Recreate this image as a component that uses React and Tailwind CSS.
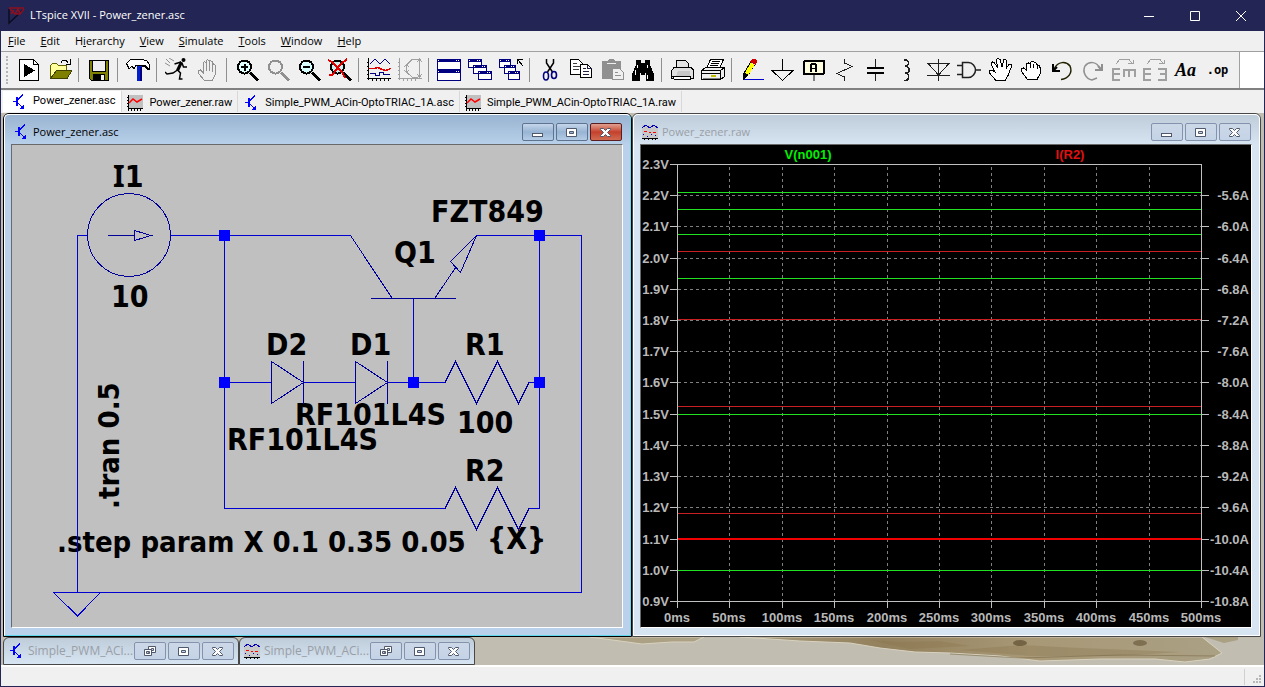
import React from "react";

const UI = "font-['Open_Sans','Noto_Sans',sans-serif]";

/* ---------- small document icons ---------- */

function AscIcon() {
  return (
    <svg viewBox="0 0 16 16" className="h-4 w-4 shrink-0" fill="none" stroke="#0000ff" shapeRendering="crispEdges" aria-hidden="true">
      <path d="M2 7.500h3" />
      <path d="M6 3v9" strokeWidth="2" />
      <path d="M12 0.500L6.500 6M7 9l5 5" />
      <path d="M12.500 11v4H9z" fill="#0000ff" stroke="none" />
    </svg>
  );
}

function RawIcon() {
  return (
    <svg viewBox="0 0 16 16" className="h-4 w-4 shrink-0" fill="none" shapeRendering="crispEdges" aria-hidden="true">
      <rect x="1" y="0" width="15" height="14" fill="#c0c0c0" />
      <path d="M1.500 0v16M1 13.500h15" stroke="#000" />
      <path d="M0 2.500h1M0 5.500h1M0 8.500h1M0 11.500h1M4.500 14v2M7.500 14v2M10.500 14v2M13.500 14v2" stroke="#000" />
      <path d="M2 8l4-4 4 3 5-3" stroke="#ff0000" strokeWidth="1.500" shapeRendering="auto" />
    </svg>
  );
}

function PlotIcon() {
  return (
    <svg viewBox="0 0 16 16" className="h-4 w-4 shrink-0" fill="none" shapeRendering="crispEdges" aria-hidden="true">
      <rect x="0" y="1" width="16" height="14" fill="#c8c8c8" />
      <path d="M0 4l4-3 4 3 4-3 4 3" stroke="#0000c0" />
      <path d="M2 7.500h3M7 8.500h2M11 8.500h3" stroke="#ff0000" />
      <path d="M1 10.500h1M5 12.500h1M9 10.500h1M13 11.500h1" stroke="#0000c0" />
      <path d="M0 14.500h16M2.500 15v1M6.500 15v1M10.500 15v1M13.500 15v1" stroke="#000" />
    </svg>
  );
}

/* ---------- toolbar icons, drawn on a 24 unit grid ---------- */

const glass = (c, lens) => (
  <>
    <circle cx="9.500" cy="9" r="6.500" fill={lens} stroke={c} strokeWidth="2" />
    <path d="M15 14.500l8 8" stroke={c} strokeWidth="3" />
  </>
);

const win = (x, y, w, h) => (
  <g key={`${x}-${y}`}>
    <rect x={x + 0.5} y={y + 0.5} width={w - 1} height={h - 1} fill="#fff" stroke="#000080" />
    <rect x={x} y={y} width={w} height="3" fill="#000080" />
    <path d={`M${x + 1} ${y + 1.5}h1M${x + w - 5} ${y + 1.5}h1M${x + w - 3} ${y + 1.5}h1`} stroke="#fff" />
  </g>
);

const ICONS = {
  new: (
    <>
      <path d="M2.500 1.500h14l5 5v15.500h-19z" fill="#fff" stroke="#000" />
      <path d="M16.500 1.500v5h5" stroke="#000" />
      <path d="M7 6l11 6.500L7 19z" fill="#000" />
    </>
  ),
  open: (
    <>
      <path d="M2.500 19.500v-12l2-2h4l2 2h8v4" fill="#ffff9c" stroke="#606000" />
      <path d="M2.500 20.500l6-8h15.500l-5 8z" fill="#808000" stroke="#404000" />
      <path d="M13 4.500c1-3 5-3 7 0M22.500 1v5h-5" stroke="#000" />
    </>
  ),
  save: (
    <>
      <path d="M2.500 2.500h19v20h-17l-2-2z" fill="#808000" stroke="#000" />
      <rect x="6" y="3" width="12" height="10" fill="#efefef" />
      <rect x="6" y="16" width="12" height="6" fill="#000" />
      <rect x="14" y="17" width="3" height="5" fill="#efefef" />
      <path d="M5.500 3v10h13V3" stroke="#000" />
    </>
  ),
  hammer: (
    <>
      <rect x="11" y="8" width="5" height="15" fill="#0020d0" />
      <path d="M15 9v14" stroke="#000080" strokeWidth="2" />
      <path d="M0.500 5.500L4 2l12-.500 5 1.500 2.500 3.500v5h-2l-3-4H10l-2 3-2-2-3 2z" fill="#fff" stroke="#000" />
      <path d="M16 7.500h3l3 4" stroke="#000" strokeWidth="2" />
    </>
  ),
  run: (
    <g shapeRendering="auto">
      <circle cx="18.500" cy="2" r="2" fill="#000" />
      <path d="M16 4L9.500 6M17 5l1.500 4h3.500M12.500 12L8 15l-6 1-2-2M12.500 12l3 3-1 6h3" stroke="#000" strokeWidth="1.500" />
      <path d="M16.500 4l-4 8.500" stroke="#000" strokeWidth="3" />
      <path d="M1 1l4 4M4 0l5 3M0 5l5 3" stroke="#909090" />
    </g>
  ),
  halt: (
    <>
      <path
        d="M8.500 22.500L2.500 15.500V12.500l2-.500 3 3V4.500l1-1 1.500 1V2.500l1.500-1 1.500 1v1l1.500-1 1.500 1V7l1.500-1 1.500 1V17l-2.500 5.500z"
        fill="#efefef"
        stroke="#909090"
      />
      <path d="M10.500 4v9M13.500 3v10M16.500 6v8" stroke="#909090" />
    </>
  ),
  zoomIn: (
    <>
      {glass("#000", "#e0ffff")}
      <path d="M6 9h7M9.500 5.500v7" stroke="#000" strokeWidth="2" />
    </>
  ),
  pan: glass("#909090", "#efefef"),
  zoomOut: (
    <>
      {glass("#000", "#d8ffff")}
      <path d="M6 9h7" stroke="#000" strokeWidth="2" />
    </>
  ),
  zoomFull: (
    <>
      {glass("#000", "#c8f0f0")}
      <path d="M0 2l4 2 10 10 3 6M19 1l-6 5L4 17H1" stroke="#e00000" strokeWidth="2" />
    </>
  ),
  autorange: (
    <>
      <path d="M1.500 0v22M0 20.500h24M0 4.500h1M0 8.500h1M0 12.500h1M0 16.500h1M5.500 21v2M9.500 21v2M13.500 21v2M17.500 21v2M21.500 21v2" stroke="#000" />
      <path d="M3 6l5-5 5 5 5-5 5 5" stroke="#000080" />
      <path d="M2 10.500h5l4-1 4 2 4 1 5-2" stroke="#e00000" strokeWidth="1.500" />
      <path d="M3 15.500h5v2h4v-3h4v2h7" stroke="#000080" />
    </>
  ),
  reset: (
    <path d="M1.500 0v22M0 20.500h24M0 4.500h1M0 8.500h1M0 12.500h1M0 16.500h1M5.500 21v2M9.500 21v2M13.500 21v2M17.500 21v2M20 1.500H14L8.500 7v7l5.500 5h6M21.500 1v18M19 4l2.500-3L24 4M19 16l2.500 3 2.500-3M6 9l2.500-2L11 9M6 12l2.500 2 2.500-2" stroke="#a0a0a0" />
  ),
  tile: (
    <>
      {win(0, 1, 24, 11)}
      {win(0, 12, 24, 11)}
    </>
  ),
  cascade: (
    <>
      {win(0, 1, 14, 9)}
      {win(5, 7, 14, 9)}
      {win(10, 13, 14, 9)}
    </>
  ),
  closeAll: (
    <>
      {win(0, 1, 12, 9)}
      {win(5, 7, 12, 9)}
      {win(9, 13, 12, 9)}
      <path d="M18.500 6V1.500h5M19 2l5 6" stroke="#000" />
    </>
  ),
  cut: (
    <g shapeRendering="auto">
      <path d="M8.500 1v4l6 9M15.500 1v4l-6 9" stroke="#000" strokeWidth="1.500" />
      <ellipse cx="8" cy="18" rx="2.500" ry="4" stroke="#000080" strokeWidth="1.600" />
      <ellipse cx="16" cy="17" rx="2.500" ry="3.500" stroke="#000080" strokeWidth="1.600" />
    </g>
  ),
  copy: (
    <>
      <path d="M1.500 1.500h8l4 4v11h-12z" fill="#fff" stroke="#000" />
      <path d="M4 5.500h4M4 8.500h7M4 11.500h6" stroke="#404040" />
      <path d="M11.500 6.500h7l4 4v9h-11z" fill="#fff" stroke="#000" />
      <path d="M18.500 6.500v4h4M14 10.500h3M14 13.500h6M14 16.500h6" stroke="#202040" />
    </>
  ),
  paste: (
    <>
      <path d="M2 3h5l2-2h4l2 2h6v18H2z" fill="#909090" />
      <path d="M7 5.500h9" stroke="#efefef" />
      <path d="M12.500 10.500h7l4 4v7h-11z" fill="#efefef" stroke="#909090" />
      <path d="M15 14.500h3M15 17.500h6" stroke="#909090" />
    </>
  ),
  find: (
    <>
      <path d="M5 2h5v3h4V2h5v5l4 9v7h-8v-8h-1v2h-4v-2H9v8H1v-7l4-9z" fill="#000" />
      <path d="M6.500 7v3M4.500 12v5M16.500 7v3M16.500 17v4" stroke="#fff" />
    </>
  ),
  setup: (
    <>
      <path d="M6.500 9V2.500h9l3 3V9" fill="#e4e4e4" stroke="#000" />
      <path d="M4 9.500h17l2 2v9H1.500v-8z" fill="#e0e0e0" stroke="#000" />
      <path d="M8 13h12v6H6z" fill="#c8c8c8" />
      <path d="M2.500 18.500h18v3H4.500z" fill="#fff" stroke="#000" />
    </>
  ),
  print: (
    <>
      <path d="M5.500 10l4-8.500h13l-4 8.500z" fill="#fff" stroke="#000" />
      <path d="M11 3.500h8M10 5.500h8M9 7.500h8" stroke="#000" />
      <path d="M0.500 12.500l4-3h19l-4 3zM0.500 12.500h19v9h-19zM19.500 12.500l4-3v9l-4 3z" fill="#efefef" stroke="#000" />
      <path d="M1 15.500h18" stroke="#000" />
      <path d="M10 17.500h5" stroke="#c0c000" strokeWidth="2" />
      <path d="M2 20.500h17" stroke="#808080" />
    </>
  ),
  wire: (
    <>
      <path d="M3 22v-6L10 4l5 3-7 11z" fill="#000" />
      <path d="M5 15L10.500 5l4 2-6 10z" fill="#ffff00" />
      <path d="M10 4l2-3h3l2 2-1 4z" fill="#d00000" />
      <path d="M4 21.500h20" stroke="#0000d0" />
    </>
  ),
  ground: <path d="M11.500 1v11M0 12.500h23M1 12.500l10.500 10 10.500-10" stroke="#000" />,
  label: (
    <>
      <rect x="2" y="3" width="20" height="13" rx="1" fill="#ffffe0" stroke="#000" strokeWidth="2" />
      <path d="M9 14V7l1-1h3l1 1v7M9 10.500h5" stroke="#000" strokeWidth="1.800" />
      <path d="M12 17v6" stroke="#808080" strokeWidth="2" />
    </>
  ),
  resistor: <path d="M11.500 1v4l7.500 3.500-15 7 7.500 3.500v4" stroke="#202020" />,
  capacitor: (
    <>
      <path d="M11.500 1v8M11.500 15v8" stroke="#202020" />
      <path d="M3 10h17M3 15h17" stroke="#000" strokeWidth="2" />
    </>
  ),
  inductor: (
    <path d="M8.500 2h3l2 2v2l-2 2h-2M10 8.500h2l2 2v3l-2 1.500h-2.500M10 15.500h2l1.500 2v3l-2 2H8.500" stroke="#202020" strokeWidth="1.500" />
  ),
  diode: <path d="M12.500 1v22M1 5.500h23M2.500 6l10 11L22.500 6M1 17.500h23" stroke="#202020" />,
  component: (
    <path d="M0 7.500h6M0 16.500h6M5.500 4.500v15h6c4 0 7-4 7-7.500s-3-7.500-7-7.500zM19 12h5" stroke="#202020" strokeWidth="1.500" shapeRendering="auto" />
  ),
  move: (
    <path d="M8 22.500l-7-8V12h3l3 2-4-8 1.500-2 2 1L10 10 8 2l2-1.500 2 1L14 9l2-7.500 2 .5.500 2L18 11l3-5 2 .5.500 2-3.500 9-3 5z" fill="#fff" stroke="#000" />
  ),
  drag: (
    <path d="M8.500 21.500l-6-8V11l2-1 3 2V6l2-1 1.500 1 1-2 2-1 1.500 1.500L17 5l1 1.500 2 1 1 2V16l-3 5.500zM11 6v4M14.500 6v4M18 7v4" fill="#fff" stroke="#000" />
  ),
  undo: (
    <g shapeRendering="auto">
      <path d="M4 11C8 3 16 3 20 8c3 7-2 13-9 13.500" stroke="#202000" strokeWidth="1.500" />
      <path d="M3 6v7h7M3 13l4-4" stroke="#000" strokeWidth="2" />
    </g>
  ),
  redo: (
    <g shapeRendering="auto">
      <path d="M19 11C16 3 8 3 4 8c-3 6 1 13 7 14l5-2" stroke="#909090" strokeWidth="1.500" />
      <path d="M21 6v6h-7M21 12l-4-4" stroke="#909090" strokeWidth="2" />
    </g>
  ),
  rotate: (
    <>
      <path d="M4 6l4-5h9l3 5M16 5.500h5V2" stroke="#a0a0a0" />
      <path d="M8 11H0M8 16H0M8 22H0M1 10v13M11 12h13M12 12v7M17 12v7M23 12v7" stroke="#a0a0a0" strokeWidth="2" />
    </>
  ),
  mirror: (
    <>
      <path d="M4 6l4-5h9l3 5M16 5.500h5V2" stroke="#a0a0a0" />
      <path d="M8 11H0M8 16H0M8 22H0M1 10v13M15 11h8M17 16h6M15 22h8M23 10v13" stroke="#a0a0a0" strokeWidth="2" />
    </>
  ),
};

const SEP = null;
const TOOLS = [
  ["New schematic", "new"], ["Open", "open"], SEP,
  ["Save", "save"], SEP,
  ["Control panel", "hammer"], SEP,
  ["Run", "run"], ["Halt", "halt"], SEP,
  ["Zoom in", "zoomIn"], ["Pan", "pan"], ["Zoom out", "zoomOut"], ["Zoom full extents", "zoomFull"], SEP,
  ["Autorange", "autorange"], ["Reset axis", "reset"], SEP,
  ["Tile windows", "tile"], ["Cascade windows", "cascade"], ["Close all windows", "closeAll"], SEP,
  ["Cut", "cut"], ["Copy", "copy"], ["Paste", "paste"], ["Find", "find"], SEP,
  ["Print setup", "setup"], ["Print", "print"], SEP,
  ["Wire", "wire"], ["Ground", "ground"], ["Label net", "label"], ["Resistor", "resistor"],
  ["Capacitor", "capacitor"], ["Inductor", "inductor"], ["Diode", "diode"], ["Component", "component"],
  ["Move", "move"], ["Drag", "drag"], ["Undo", "undo"], ["Redo", "redo"], ["Rotate", "rotate"], ["Mirror", "mirror"],
];

function Toolbar() {
  return (
    <div className="flex h-[37px] border-t border-[#a0a0a0] bg-white">
      <div className="flex items-center border-r border-[#a0a0a0] bg-[#f0f0f0] pr-[6px]">
        <div className="mr-[6px] ml-[5px] h-7 w-0 border-l-2 border-dotted border-[#b4b4b4]" />
        {TOOLS.map((t, i) =>
          t === SEP ? (
            <div key={i} className="h-6 w-2 pl-[2px]">
              <div className="h-full w-px bg-[#909090]" />
            </div>
          ) : (
            <button key={i} type="button" aria-label={t[0]} className="w-[31px] pl-[3px]">
              <svg viewBox="0 0 24 24" className="h-6 w-6" fill="none" shapeRendering="crispEdges" aria-hidden="true">
                {ICONS[t[1]]}
              </svg>
            </button>
          )
        )}
        <button type="button" aria-label="Text" className="w-[31px] pl-1 text-left font-['Liberation_Serif',serif] text-lg leading-6 font-bold text-black italic">
          Aa
        </button>
        <button type="button" aria-label="SPICE directive" className="w-[31px] text-center font-['DejaVu_Sans_Mono',monospace] text-xs leading-6 font-bold text-black">
          .op
        </button>
      </div>
    </div>
  );
}

/* ---------- application chrome ---------- */

function TitleBar() {
  return (
    <header className="flex h-[31px] items-center bg-[#232654] text-white">
      <svg viewBox="0 0 20 18" className="ml-[6px] h-[18px] w-5" fill="none" aria-hidden="true">
        <path d="M2 2v14L16 3" stroke="#0c0c20" strokeWidth="1.500" />
        <path d="M2 1h15M3 2l5 5 3-5 2 5 4-5M4 7l3-4M9 7h3" stroke="#8c1020" strokeWidth="1.500" />
      </svg>
      <h1 className="ml-[3px] flex-1 text-[11px]">LTspice XVII - Power_zener.asc</h1>
      {[
        ["Minimize", "M5 10.500h10"],
        ["Maximize", "M5.500 5.500h9v9h-9z"],
        ["Close", "M5 5l10 10M15 5L5 15"],
      ].map(([label, d]) => (
        <button key={label} type="button" aria-label={label} className="flex h-full w-[46px] items-center justify-center">
          <svg viewBox="0 0 20 20" className="h-5 w-5" fill="none" stroke="#fff" aria-hidden="true">
            <path d={d} />
          </svg>
        </button>
      ))}
    </header>
  );
}

const MENUS = [
  ["", "F", "ile"], ["", "E", "dit"], ["H", "i", "erarchy"], ["", "V", "iew"],
  ["", "S", "imulate"], ["", "T", "ools"], ["", "W", "indow"], ["", "H", "elp"],
];

function MenuBar() {
  return (
    <nav className="flex h-5 items-center gap-[15px] bg-[#f0f0f0] pl-[7px] text-[11px] text-black">
      {MENUS.map(([a, b, c]) => (
        <button key={b + c} type="button">
          {a}
          <u>{b}</u>
          {c}
        </button>
      ))}
    </nav>
  );
}

function Tabs() {
  return (
    <div className="flex h-[25px] items-start border-t-2 border-[#808080] bg-[#f0f0f0] pt-px pl-[2px] font-['Roboto',sans-serif] text-[11px] text-black">
      <button type="button" className="flex h-[21px] items-center gap-[6px] border-r border-[#d8d8d8] bg-white pr-[6px] pl-2">
        <AscIcon />
        Power_zener.asc
      </button>
      {[
        ["raw", "Power_zener.raw"],
        ["asc", "Simple_PWM_ACin-OptoTRIAC_1A.asc"],
        ["raw", "Simple_PWM_ACin-OptoTRIAC_1A.raw"],
      ].map(([kind, name]) => (
        <button key={name} type="button" className="flex h-[21px] items-center gap-[6px] border-r border-[#d8d8d8] pt-[3px] pr-[5px] pl-[5px]">
          {kind === "asc" ? <AscIcon /> : <RawIcon />}
          {name}
        </button>
      ))}
    </div>
  );
}

/* ---------- document windows ---------- */

const GLYPHS = {
  Minimize: <rect x="4.500" y="9.500" width="10" height="3" fill="#fff" stroke="#50586c" />,
  Maximize: <path fillRule="evenodd" d="M4.500 4.500h10v8h-10zM7.500 7.500v2h4v-2z" fill="#fff" stroke="#50586c" />,
  Restore: (
    <g fill="#fff" stroke="#50586c">
      <path fillRule="evenodd" d="M8.500 3.500h7v6h-7zM11.500 5.500v2h2v-2z" />
      <path fillRule="evenodd" d="M4.500 6.500h7v6h-7zM6.500 8.500v2h3v-2z" />
    </g>
  ),
  Close: (
    <path d="M4.500 4.500h3l2 2 2-2h3v1l-3 3 3 3v1h-3l-2-2-2 2h-3v-1l3-3-3-3z" fill="#fff" stroke="#50586c" />
  ),
};

function CaptionButtons({ kinds, active, title }) {
  return (
    <div className="flex gap-[2px]">
      {kinds.map((k) => {
        const look = !active
          ? "border-[#8592ad] bg-linear-to-b from-[#ccd8e8] to-[#c4d3e6]"
          : k === "Close"
            ? "border-[#5a1e22] bg-linear-to-b from-[#e0a090] via-[#c4402c] to-[#d06a50]"
            : "border-[#5f7390] bg-linear-to-b from-[#c4d6ea] via-[#98b4d4] to-[#b4cce6]";
        return (
          <button key={k} type="button" aria-label={`${k} ${title}`} className={`flex h-[18px] w-8 items-center justify-center rounded-[2px] border ${look}`}>
            <svg viewBox="0 0 20 16" className="h-4 w-5" aria-hidden="true">
              {GLYPHS[k]}
            </svg>
          </button>
        );
      })}
    </div>
  );
}

function DocWindow({ title, icon, active, children }) {
  return (
    <section
      className={`min-w-0 flex-1 rounded-t-md border ${active ? "border-black bg-[#b9d1ea]" : "border-[#484848] bg-[#d7e4f2]"}`}
    >
      <div className={`rounded-t-[5px] border border-t-white border-l-white pr-[7px] pb-[7px] pl-[6px] ${active ? "border-r-[#5fd8f0] border-b-[#5fd8f0] bg-linear-to-b from-[#99b4d1] via-[#b9d1ea] via-[30px] to-[#b9d1ea]" : "border-r-white border-b-white bg-linear-to-b from-[#bfcddb] via-[#d7e4f2] via-[30px] to-[#d7e4f2]"}`}>
        <div className="flex h-[29px] items-center gap-1 pt-[5px] pr-px pl-[2px]">
          {icon}
          <h2 className={`flex-1 text-[11px] leading-4 ${active ? "text-black" : "text-[#9a9fa6]"}`}>{title}</h2>
          <CaptionButtons kinds={["Minimize", "Maximize", "Close"]} active={active} title={title} />
        </div>
        <div className="border border-t-[#696969] border-r-white border-b-white border-l-[#696969]">{children}</div>
      </div>
    </section>
  );
}

function MinimizedWindow({ title, icon }) {
  return (
    <section className="flex h-7 w-[236px] items-center rounded-t-md border border-[#484848] bg-linear-to-b from-[#bfcddb] to-[#d7e4f2] pr-1 pl-1">
      {icon}
      <h2 className="ml-1 flex-1 truncate text-xs text-[#9a9fa6]">{title}</h2>
      <CaptionButtons kinds={["Restore", "Maximize", "Close"]} title={title} />
    </section>
  );
}

/* ---------- schematic ---------- */

const resistor = (y) => `M445 ${y}L455.500 ${y - 21}L476.500 ${y + 21}L497.500 ${y - 21}L518.500 ${y + 21}L529 ${y}`;
const diode = (x) => `M${x}.500 361.500V403.500L${x + 32}.500 382.500ZM${x + 32}.500 361V404`;

function Schematic() {
  return (
    <svg viewBox="12 145 610 482" className="block h-auto w-full bg-[#c0c0c0]" role="img" aria-label="Power_zener schematic">
      <g className="fill-black font-['DejaVu_Sans_Condensed','DejaVu_Sans',sans-serif] text-[30px] font-bold">
        <text x="113" y="187"><tspan className="font-['Noto_Sans',sans-serif]">I</tspan>1</text>
        <text x="111" y="307">10</text>
        <text x="431" y="222">FZT849</text>
        <text x="394" y="263">Q1</text>
        <text x="266" y="355">D2</text>
        <text x="350" y="355">D1</text>
        <text x="465" y="355">R1</text>
        <text x="457" y="433">100</text>
        <text x="295" y="425">RF101L4S</text>
        <text x="227" y="450">RF101L4S</text>
        <text x="465" y="481">R2</text>
        <text x="487" y="549">{"{X}"}</text>
        <text className="text-[29px]" x="57" y="552">.step param X 0.1 0.35 0.05</text>
        <text className="text-[29px]" transform="translate(119 509) rotate(-90)">.tran 0.5</text>
      </g>
      <g fill="none" stroke="#0000d0" shapeRendering="crispEdges">
        <path d="M87 235.500H77.500V592.500M170 235.500H350.500M224.500 235V508.500H445M224 382.500H271M303 382.500H355M387 382.500H445M413.500 382V298M477 235.500H581.500V592.500H53M539.500 235V508.500M529 382.500H540M529 508.500H540" />
      </g>
      <g fill="none" stroke="#000098" shapeRendering="crispEdges">
        <circle cx="129" cy="235" r="41.500" />
        <path d="M108 235.500H134M134.500 230.500L151 235.500L134.500 240.500Z" />
        <path d="M350.500 235.500L392 298M371 298.500H456M435 298L456 267M476.500 235.500L450.500 261.500L460.500 272.500Z" />
        <path d={diode(271)} />
        <path d={diode(355)} />
        <path d={resistor(382.5)} />
        <path d={resistor(508.5)} />
        <path d="M53.500 592.500L77.500 616L100.500 592.500" stroke="#0000d0" />
      </g>
      <g fill="#0000ff">
        {[[224, 235], [539, 235], [224, 382], [413, 382], [539, 382]].map(([x, y]) => (
          <rect key={`${x}-${y}`} x={x - 5} y={y - 5} width="11" height="11" />
        ))}
      </g>
    </svg>
  );
}

/* ---------- waveform plot ---------- */

const ys = Array.from({ length: 15 }, (_, i) => Math.round(164 + 31.21 * i) + 0.5);
const xs = Array.from({ length: 11 }, (_, i) => Math.round(677 + 52.4 * i) + 0.5);
const V_TRACES = [192.5, 209.5, 234.5, 278.5, 414.5, 570.5];
const I_TRACES = [251.5, 319.5, 406.5, 513.5];

function Plot() {
  return (
    <svg viewBox="641 145 610 482" className="block h-auto w-full bg-black" role="img" aria-label="V(n001) and I(R2) against time">
      <g stroke="#808080" strokeDasharray="3 3" shapeRendering="crispEdges">
        {ys.slice(1, -1).map((y) => <path key={y} d={`M678 ${y}H1201`} />)}
        {xs.slice(1, -1).map((x) => <path key={x} d={`M${x} 167V601`} />)}
      </g>
      <g stroke="#c0c0c0" fill="none" shapeRendering="crispEdges">
        <path d="M677.500 164.500H1201.500V608M677.500 164V608M677 601.500H1202" />
        {ys.map((y) => <path key={y} d={`M670 ${y}H677`} />)}
        {ys.slice(1).map((y) => <path key={y} d={`M1202 ${y}H1209`} />)}
        {xs.map((x) => <path key={x} d={`M${x} 602V608`} />)}
      </g>
      {V_TRACES.map((y) => <rect key={y} x="678" y={y - 0.5} width="523" height="1" fill="#20e020" />)}
      {I_TRACES.map((y) => <rect key={y} x="678" y={y - 0.5} width="523" height="1" fill="#c82020" />)}
      <rect x="678" y="538" width="523" height="2" fill="#f00000" />
      <g className="fill-[#b8b8b8] font-['Liberation_Sans',sans-serif] text-[13px] font-bold">
        {ys.map((y, i) => (
          <text key={y} x="669" y={y + 4.5} textAnchor="end">{(2.3 - i * 0.1).toFixed(1)}V</text>
        ))}
        {ys.slice(1).map((y, i) => (
          <text key={y} x="1249" y={y + 4.5} textAnchor="end">{(-5.6 - i * 0.4).toFixed(1)}A</text>
        ))}
        {xs.map((x, i) => (
          <text key={x} x={x - 0.5} y="622" textAnchor="middle">{i * 50}ms</text>
        ))}
        <text x="808" y="159" textAnchor="middle" className="fill-[#00f000]">V(n001)</text>
        <text x="1070" y="159" textAnchor="middle" className="fill-[#e01010]">I(R2)</text>
      </g>
    </svg>
  );
}

function Wallpaper() {
  return (
    <svg viewBox="475 637 786 28" preserveAspectRatio="xMinYMin slice" className="h-7 min-w-0 flex-1" aria-hidden="true">
      <defs>
        <linearGradient id="wood" x1="0" x2="1">
          <stop offset="0" stopColor="#a89c80" />
          <stop offset="0.300" stopColor="#93805c" />
          <stop offset="0.600" stopColor="#a89876" />
          <stop offset="1" stopColor="#aaa084" />
        </linearGradient>
      </defs>
      <path d="M590 637l30 4 22 3 30-2 22 0 10-5z" fill="#aca184" stroke="#d8d2c0" />
      <path d="M740 637l60 4 50 2 30 5 35 4 35 1 50 3 40 5 60-2 55 0 30 3 25-3 12-6-10-8-10-8z" fill="url(#wood)" stroke="#d8d2c0" />
      <path d="M870 640l30 2 40-1 30 5-60 3zM960 650l60-5 60 3 100 4-60 4-90 0z" fill="#8a754c" opacity="0.350" />
      <ellipse cx="1020" cy="643" rx="7" ry="3" fill="#68563a" opacity="0.800" />
      <ellipse cx="1140" cy="643" rx="7" ry="3" fill="#6e5c40" opacity="0.700" />
      <path d="M1205 637h33v3l-14 3z" fill="#aaa084" />
      <path d="M950 654l70 4 100-3 95 1" stroke="#7c6a48" opacity="0.600" fill="none" />
    </svg>
  );
}

export default function App() {
  return (
    <main className={`flex min-h-screen flex-col border-x border-b border-[#232654] bg-[#f0f0f0] ${UI}`}>
      <TitleBar />
      <MenuBar />
      <Toolbar />
      <Tabs />
      <div className="flex-1 bg-[#c1bdb0] pr-[3px] pl-[2px]">
        <div className="flex items-start">
          <DocWindow title="Power_zener.asc" icon={<AscIcon />} active>
            <Schematic />
          </DocWindow>
          <DocWindow title="Power_zener.raw" icon={<PlotIcon />}>
            <Plot />
          </DocWindow>
        </div>
        <div className="flex">
          <MinimizedWindow title="Simple_PWM_ACi..." icon={<AscIcon />} />
          <MinimizedWindow title="Simple_PWM_ACi..." icon={<PlotIcon />} />
          <Wallpaper />
        </div>
      </div>
      <footer className="flex h-[21px] items-end justify-end border-t-2 border-white bg-[#f0f0f0]">
        <div className="h-4 w-5 self-center border-l border-[#d0d0d0]" />
        <svg viewBox="0 0 9 9" className="-ml-[11px] mb-[2px] mr-[2px] h-[9px] w-[9px]" fill="#b8b8b8" aria-hidden="true">
          <path d="M6 0h2v2h-2zM3 3h2v2h-2zM6 3h2v2h-2zM0 6h2v2h-2zM3 6h2v2h-2zM6 6h2v2h-2z" />
        </svg>
      </footer>
    </main>
  );
}
